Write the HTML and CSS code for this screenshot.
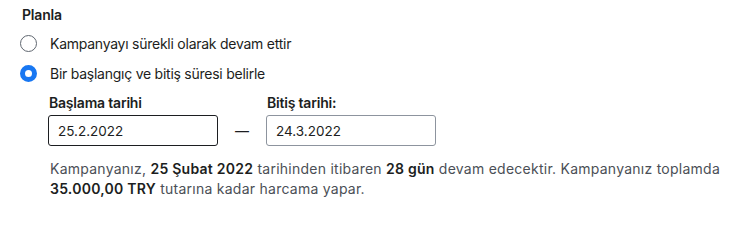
FILE: index.html
```html
<!DOCTYPE html>
<html lang="tr">
<head>
<meta charset="utf-8">
<link rel="stylesheet" href="styles.css">
</head>
<body>
<section class="schedule">
  <h3 class="title">Planla</h3>
  <label class="option">
    <span class="radio"></span>
    <span class="option-text">Kampanyayı sürekli olarak devam ettir</span>
  </label>
  <label class="option">
    <span class="radio checked"></span>
    <span class="option-text">Bir başlangıç ve bitiş süresi belirle</span>
  </label>
  <div class="dates">
    <div class="field">
      <div class="field-label">Başlama tarihi</div>
      <div class="input focused">25.2.2022</div>
    </div>
    <div class="dash">—</div>
    <div class="field">
      <div class="field-label">Bitiş tarihi:</div>
      <div class="input">24.3.2022</div>
    </div>
  </div>
  <p class="summary">Kampanyanız, <b>25 Şubat 2022</b> tarihinden itibaren <b>28 gün</b> devam edecektir. Kampanyanız toplamda <b>35.000,00 TRY</b> tutarına kadar harcama yapar.</p>
</section>
</body>
</html>
```
FILE: styles.css
```css
html, body {
  margin: 0;
  padding: 0;
  background: #ffffff;
}
body {
  font-family: Inter, "Noto Sans", sans-serif;
  color: #1c1e21;
}
.schedule {
  padding: 6px 20px 0 22px;
}
.title {
  margin: 0 0 4px;
  font-size: 14px;
  font-weight: 600;
  letter-spacing: -0.2px;
  line-height: 18px;
}
.option {
  display: flex;
  align-items: center;
  height: 30px;
  margin-left: -2px;
  font-size: 14px;
  letter-spacing: -0.25px;
}
.radio {
  box-sizing: border-box;
  width: 17px;
  height: 17px;
  border-radius: 50%;
  border: 1px solid #606770;
  margin-right: 13px;
  flex: none;
}
.radio.checked {
  border: 5px solid #1877f2;
}
.dates {
  display: flex;
  align-items: flex-end;
  margin-top: 6px;
  padding-left: 26px;
}
.field-label {
  font-size: 14px;
  font-weight: 600;
  letter-spacing: -0.2px;
  line-height: 18px;
  margin: 0 0 3px 1px;
}
.input {
  box-sizing: border-box;
  width: 170px;
  height: 31px;
  border: 1px solid #8d949e;
  border-radius: 3px;
  padding: 0 9px;
  display: flex;
  align-items: center;
  font-size: 13.5px;
}
.input.focused {
  border-color: #1c1e21;
}
.dash {
  width: 48px;
  height: 31px;
  display: flex;
  align-items: center;
  justify-content: center;
  font-size: 14px;
}
.summary {
  margin: 13px 0 0 28px;
  font-size: 14px;
  letter-spacing: 0.25px;
  line-height: 20px;
  color: #4b4f56;
}
.summary b {
  font-weight: 600;
  color: #1c1e21;
}
```
